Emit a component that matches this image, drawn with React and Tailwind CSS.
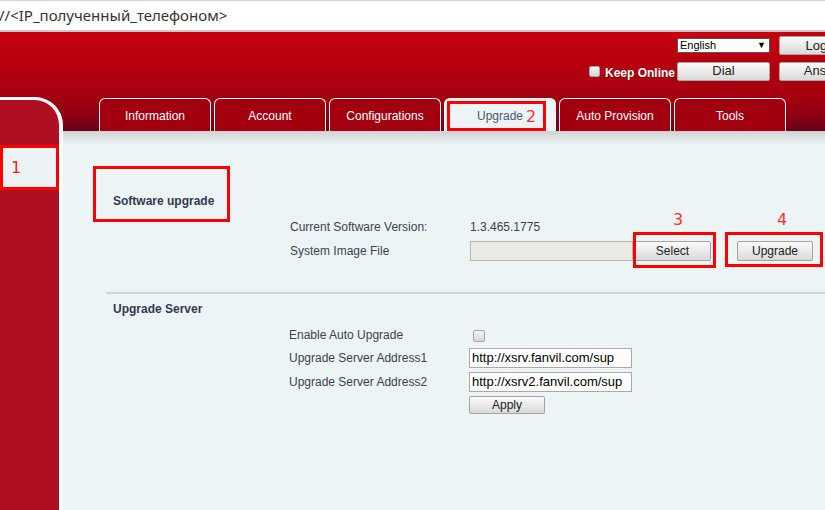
import React from "react";

const tabs = ["Information", "Account", "Configurations", "Upgrade", "Auto Provision", "Tools"];

const btnClass =
  "flex items-center justify-center border border-[#a3a3a3] rounded-[2px] bg-linear-to-b from-[#fbfbfb] to-[#d9d9d9] text-[#222] shrink-0";

const Checkbox = ({ size = "w-[12px] h-[12px]" }) => (
  <span className={`block ${size} shrink-0 rounded-[2px] border border-[#a6a6a6] bg-linear-to-b from-[#f4f4f4] to-[#d6d6d6]`} />
);

const Annotation = ({ className, label, labelClass }) => (
  <div className={`absolute border-[3px] border-[#ff0000] pointer-events-none ${className}`}>
    {label && (
      <span className={`absolute text-[16px] leading-[18px] text-[#ff3030] font-['DejaVu_Sans',sans-serif] ${labelClass}`}>
        {label}
      </span>
    )}
  </div>
);

const TopControls = () => (
  <div className="h-[65px] text-[12px]">
    <div className="pt-[4px] pl-[677px] flex items-center gap-[9px]">
      <div className="w-[93px] h-[15px] bg-white border border-[#555] flex items-center justify-between px-[2px] text-[11px] text-black shrink-0">
        <span>English</span>
        <span className="text-[9px] pr-[1px]">▼</span>
      </div>
      <div className={`${btnClass} w-[93px] h-[19px] text-[13px] whitespace-nowrap`}>Logout</div>
    </div>
    <div className="mt-[5px] pl-[589px] flex items-center">
      <div className="w-[88px] flex items-center shrink-0">
        <Checkbox size="w-[11px] h-[11px]" />
        <span className="ml-[5px] mt-[4px] font-bold text-white text-[12px] whitespace-nowrap [text-shadow:0_1px_1px_rgba(0,0,0,0.35)]">
          Keep Online
        </span>
      </div>
      <div className={`${btnClass} w-[93px] h-[19px] text-[13px]`}>Dial</div>
      <div className={`${btnClass} ml-[9px] w-[93px] h-[19px] text-[13px] whitespace-nowrap`}>Answer</div>
    </div>
  </div>
);

const Sidebar = () => (
  <div className="w-[63px] shrink-0 bg-[#ae1022] border-t-[3px] border-r-[4px] border-white rounded-tr-[28px]">
    <div className="mt-[45px] h-[45px] bg-[#edf3f5] border-[3px] border-[#ff0000] flex items-center pl-[8px]">
      <span className="text-[16px] text-[#ff2020] font-['DejaVu_Sans',sans-serif]">1</span>
    </div>
  </div>
);

const Tabs = () => (
  <div className="h-[34px] pt-[1px] pl-[36px] flex gap-[3px]">
    {tabs.map((tab) => {
      const active = tab === "Upgrade";
      return (
        <div
          key={tab}
          className={`relative w-[112px] h-[33px] shrink-0 rounded-t-[6px] border border-b-0 border-white flex items-center justify-center pt-[2px] text-[12px] ${
            active ? "bg-[#eef4f6] text-[#4a5a70]" : "bg-[#a3000f] text-white"
          }`}
        >
          {tab}
          {active && (
            <Annotation
              className="left-[2px] top-[2px] w-[99px] h-[30px]"
              label="2"
              labelClass="left-[76px] top-[4px]"
            />
          )}
        </div>
      );
    })}
  </div>
);

const Content = () => (
  <div className="flex-1 text-[12px] leading-[14px] text-[#3a444e]">
    <div className="pt-[49px] pl-[50px]">
      <div className="relative w-max font-bold text-[#2f3c50]">
        Software upgrade
        <Annotation className="left-[-20px] top-[-28px] w-[137px] h-[56px]" />
      </div>
    </div>

    <div className="pl-[227px]">
      <div className="mt-[12px] h-[14px] flex items-center">
        <span className="w-[180px] shrink-0">Current Software Version:</span>
        <span>1.3.465.1775</span>
      </div>
      <div className="mt-[7px] h-[20px] flex items-center">
        <span className="w-[180px] shrink-0">System Image File</span>
        <div className="w-[163px] h-[20px] shrink-0 bg-[#ebebe4] border border-[#b5b5b5]" />
        <div className="relative ml-[1px]">
          <div className={`${btnClass} w-[77px] h-[20px] text-[12px]`}>Select</div>
          <Annotation
            className="left-[-1px] top-[-9px] w-[83px] h-[36px]"
            label="3"
            labelClass="left-[37px] top-[-24px]"
          />
        </div>
        <div className="relative ml-[26px]">
          <div className={`${btnClass} w-[76px] h-[20px] text-[12px]`}>Upgrade</div>
          <Annotation
            className="left-[-12px] top-[-9px] w-[98px] h-[35px]"
            label="4"
            labelClass="left-[49px] top-[-24px]"
          />
        </div>
      </div>
    </div>

    <div className="mt-[31px] ml-[43px] border-t-2 border-[#d2d5d6]" />

    <div className="mt-[8px] pl-[50px] font-bold text-[#2f3c50]">Upgrade Server</div>

    <div className="pl-[226px]">
      <div className="mt-[12px] h-[14px] flex items-center">
        <span className="w-[180px] shrink-0">Enable Auto Upgrade</span>
        <span className="ml-[4px] mt-[1px]">
          <Checkbox />
        </span>
      </div>
      <div className="mt-[6px] h-[20px] flex items-center">
        <span className="w-[180px] shrink-0">Upgrade Server Address1</span>
        <div className="w-[163px] h-[20px] shrink-0 bg-white border border-[#a9a9a9] pl-[2px] flex items-center text-[13px] text-black">
          http://xsrv.fanvil.com/sup
        </div>
      </div>
      <div className="mt-[4px] h-[20px] flex items-center">
        <span className="w-[180px] shrink-0">Upgrade Server Address2</span>
        <div className="w-[163px] h-[20px] shrink-0 bg-white border border-[#a9a9a9] pl-[2px] flex items-center text-[13px] text-black overflow-hidden whitespace-nowrap">
          http://xsrv2.fanvil.com/sup
        </div>
      </div>
      <div className="mt-[4px] ml-[180px]">
        <div className={`${btnClass} w-[76px] h-[18px] text-[12px]`}>Apply</div>
      </div>
    </div>
  </div>
);

export default function App() {
  return (
    <div className="w-[825px] h-[510px] overflow-hidden bg-[#ecf4f6] font-['Liberation_Sans',Arial,sans-serif]">
      <div className="h-[32px] bg-white border-t border-[#d4d4d4] border-b-2 border-b-[#c9c9c9] flex items-center overflow-hidden">
        <span className="font-['Noto_Sans',sans-serif] text-[15px] text-[#333] -ml-[1px] leading-none whitespace-nowrap">
          //&lt;IP_полученный_телефоном&gt;
        </span>
      </div>
      <div className="h-[478px] flex flex-col bg-[linear-gradient(to_bottom,#c6000f_0px,#b2000f_40px,#a3000f_66px,#8c0013_84px,#640019_99px,#ecf4f6_99px)]">
        <TopControls />
        <div className="flex flex-1 min-h-0">
          <Sidebar />
          <div className="flex-1 flex flex-col min-w-0">
            <Tabs />
            <div className="h-[14px] bg-linear-to-b from-[#cfd2d4] to-[#ecf4f6]" />
            <Content />
          </div>
        </div>
      </div>
    </div>
  );
}
